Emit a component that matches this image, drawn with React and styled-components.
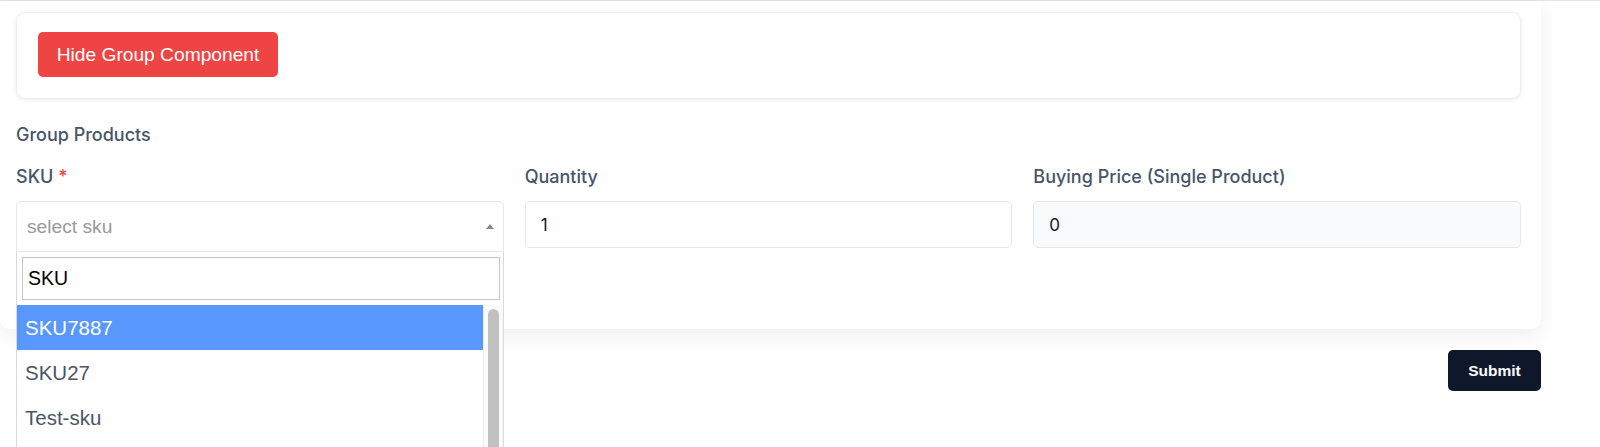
import React from "react";
import styled, { createGlobalStyle } from "styled-components";

const GlobalStyle = createGlobalStyle`
  html { overflow: hidden; }
  html, body { margin: 0; padding: 0; background: #fff; }
  body { font-family: Inter, "Liberation Sans", sans-serif; }
  * { box-sizing: border-box; }
`;

const Page = styled.div`
  width: 1600px;
  height: 447px;
  overflow: hidden;
`;

const TopRule = styled.div`
  height: 1px;
  background: #e4e4e4;
`;

const Shell = styled.div`
  display: flex;
  flex-direction: column;
  padding-right: 59px;
`;

const Card = styled.section`
  background: #fff;
  border-radius: 0 0 9px 9px;
  box-shadow: 0 6px 22px rgba(0, 0, 0, 0.07);
  padding: 11px 20px 77px 16px;
`;

const ToggleCard = styled.div`
  border: 1px solid #eceef0;
  border-radius: 9px;
  box-shadow: 0 1px 4px rgba(0, 0, 0, 0.08);
  padding: 19px 21px 21px;
`;

const DangerButton = styled.button`
  width: 240px;
  height: 45px;
  border: none;
  border-radius: 5px;
  background: #ef4444;
  color: #fff;
  font-family: "Liberation Sans", Arial, sans-serif;
  font-size: 19.2px;
  padding: 0;
  cursor: pointer;
`;

const SectionTitle = styled.div`
  margin-top: 24px;
  font-size: 18px;
  line-height: 24px;
  font-weight: 500;
  color: #475569;
`;

const FieldGrid = styled.div`
  margin-top: 18px;
  display: grid;
  grid-template-columns: repeat(3, 1fr);
  column-gap: 21px;
`;

const Field = styled.div`
  display: flex;
  flex-direction: column;
  min-width: 0;
`;

const Label = styled.label`
  font-size: 18px;
  line-height: 24px;
  font-weight: 500;
  color: #475569;
  margin-bottom: 12px;
`;

const Req = styled.span`
  color: #ef4444;
`;

const SelectWrap = styled.div`
  position: relative;
`;

const SelectBox = styled.div`
  height: 51px;
  border: 1px solid #e5e7eb;
  border-radius: 5px 5px 0 0;
  padding: 0 9px 0 10px;
  display: flex;
  align-items: center;
  justify-content: space-between;
  background: #fff;
`;

const Placeholder = styled.span`
  font-family: "Liberation Sans", Arial, sans-serif;
  font-size: 19.2px;
  color: #999;
`;

const Caret = styled.span`
  width: 0;
  height: 0;
  border-left: 4.5px solid transparent;
  border-right: 4.5px solid transparent;
  border-bottom: 5px solid #888;
`;

const Dropdown = styled.div`
  position: absolute;
  top: 51px;
  left: 0;
  right: 0;
  z-index: 10;
  background: #fff;
  border: 1px solid #d9d9d9;
  border-top: none;
`;

const SearchBox = styled.div`
  padding: 5px 3px 5px 5px;
`;

const SearchInput = styled.input`
  display: block;
  width: 100%;
  height: 43px;
  border: 1px solid #c6c6c6;
  padding: 0 5px;
  font-family: "Liberation Sans", Arial, sans-serif;
  font-size: 19.5px;
  color: #000;
  outline: none;
`;

const OptionsRow = styled.div`
  display: flex;
  height: 200px;
`;

const OptionList = styled.ul`
  list-style: none;
  margin: 0;
  padding: 0;
  flex: 1;
`;

const Option = styled.li`
  height: 45px;
  display: flex;
  align-items: center;
  padding: 0 8px;
  font-family: "Liberation Sans", Arial, sans-serif;
  font-size: 20.5px;
  color: ${(p) => (p.$active ? "#fff" : "#4a5568")};
  background: ${(p) => (p.$active ? "#5897fb" : "#fff")};
`;

const ScrollTrack = styled.div`
  width: 20px;
  border-left: 1px solid #ececec;
  background: #fafafa;
  padding: 4px 4px 0 4px;
`;

const ScrollThumb = styled.div`
  height: 180px;
  border-radius: 6px;
  background: #c1c1c1;
`;

const TextInput = styled.input`
  height: 47px;
  width: 100%;
  border: 1px solid #e5e7eb;
  border-radius: 5px;
  padding: 0 15px;
  font-family: Inter, sans-serif;
  font-size: 17px;
  color: #111827;
  background: ${(p) => (p.$muted ? "#f8fafc" : "#fff")};
  outline: none;
`;

const Footer = styled.div`
  display: flex;
  justify-content: flex-end;
  margin-top: 21px;
`;

const SubmitButton = styled.button`
  width: 93px;
  height: 41px;
  border: none;
  border-radius: 5px;
  background: #0f172a;
  color: #fff;
  font-family: "Liberation Sans", Arial, sans-serif;
  font-weight: 700;
  font-size: 15.5px;
  padding: 0;
  cursor: pointer;
`;

const options = ["SKU7887", "SKU27", "Test-sku"];

export default function App() {
  return (
    <Page>
      <GlobalStyle />
      <TopRule />
      <Shell>
        <Card>
          <ToggleCard>
            <DangerButton type="button">Hide Group Component</DangerButton>
          </ToggleCard>
          <SectionTitle>Group Products</SectionTitle>
          <FieldGrid>
            <Field>
              <Label>
                SKU <Req>*</Req>
              </Label>
              <SelectWrap>
                <SelectBox>
                  <Placeholder>select sku</Placeholder>
                  <Caret />
                </SelectBox>
                <Dropdown>
                  <SearchBox>
                    <SearchInput defaultValue="SKU" />
                  </SearchBox>
                  <OptionsRow>
                    <OptionList>
                      {options.map((o, i) => (
                        <Option key={o} $active={i === 0}>
                          {o}
                        </Option>
                      ))}
                    </OptionList>
                    <ScrollTrack>
                      <ScrollThumb />
                    </ScrollTrack>
                  </OptionsRow>
                </Dropdown>
              </SelectWrap>
            </Field>
            <Field>
              <Label>Quantity</Label>
              <TextInput defaultValue="1" />
            </Field>
            <Field>
              <Label>Buying Price (Single Product)</Label>
              <TextInput $muted defaultValue="0" readOnly />
            </Field>
          </FieldGrid>
        </Card>
        <Footer>
          <SubmitButton type="button">Submit</SubmitButton>
        </Footer>
      </Shell>
    </Page>
  );
}
